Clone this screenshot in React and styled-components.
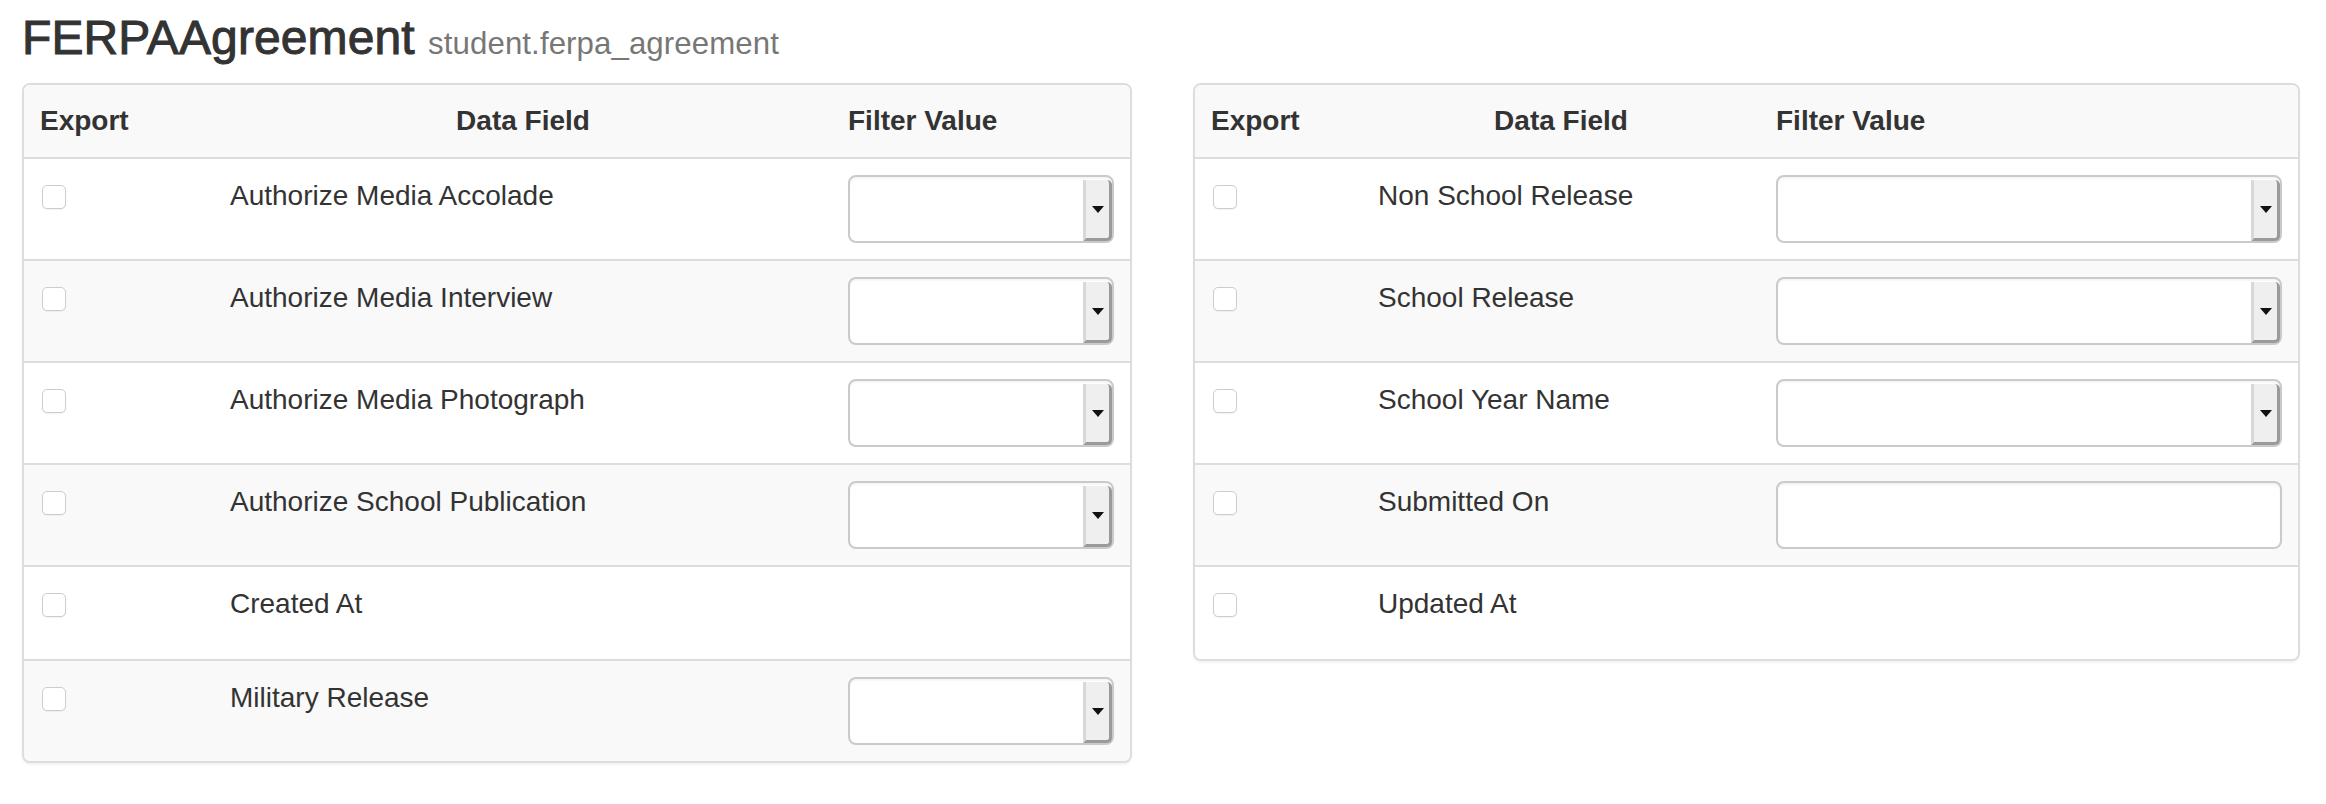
import React from "react";
import styled, { createGlobalStyle } from "styled-components";

const GlobalStyle = createGlobalStyle`
  html, body { margin: 0; padding: 0; background: #fff; }
  body {
    font-family: "Liberation Sans", Arial, Helvetica, sans-serif;
    color: #333;
    font-size: 28px;
    line-height: 40px;
  }
  * { box-sizing: border-box; }
`;

const Page = styled.div`
  width: 2326px;
  padding: 12px 0 40px 22px;
`;

const Title = styled.h3`
  margin: 0 0 18px;
  font-size: 48px;
  line-height: 52.8px;
  font-weight: 400;
  color: #333;
  letter-spacing: 0.1px;
  -webkit-text-stroke: 1px #333;
`;

const SubTitle = styled.small`
  font-size: 31.2px;
  line-height: 1;
  font-weight: 400;
  color: #777;
  letter-spacing: 0.1px;
  -webkit-text-stroke: 0;
`;

const Panels = styled.div`
  display: flex;
  align-items: flex-start;
  gap: 61px;
`;

const Panel = styled.div`
  width: ${(p) => p.$w}px;
  border: 2px solid #ddd;
  border-radius: 8px;
  overflow: hidden;
  background: #fff;
  box-shadow: 0 2px 2px rgba(0, 0, 0, 0.05);
`;

const Table = styled.table`
  width: 100%;
  border-collapse: separate;
  border-spacing: 0;
  table-layout: fixed;
`;

const Col = styled.col`
  width: ${(p) => (p.$w ? `${p.$w}px` : "auto")};
`;

const HeadCell = styled.th`
  padding: 16px;
  text-align: ${(p) => p.$align || "left"};
  font-weight: 700;
  background: #f9f9f9;
  vertical-align: bottom;
  line-height: 40px;
`;

const Row = styled.tr`
  background: ${(p) => (p.$striped ? "#f9f9f9" : "#fff")};
`;

const Cell = styled.td`
  padding: 16px;
  border-top: 2px solid #ddd;
  vertical-align: top;
  line-height: 40px;
`;

const CheckWrap = styled.div`
  height: 60px;
  padding: 10px 0 0 2px;
`;

const Checkbox = styled.input.attrs({ type: "checkbox" })`
  appearance: none;
  -webkit-appearance: none;
  display: block;
  width: 24px;
  height: 24px;
  margin: 0;
  border: 1.5px solid #cdcdcd;
  border-radius: 5px;
  background: #fff;
  box-shadow: 0 1px 1px rgba(0, 0, 0, 0.05);
`;

const FieldName = styled.span`
  display: block;
  padding-top: 1px;
`;

const SelectBox = styled.div`
  display: flex;
  justify-content: flex-end;
  height: 68px;
  width: 100%;
  padding: 3px 0 0 0;
  border: 2px solid #cacaca;
  border-radius: 8px;
  background: #fff;
  box-shadow: inset 0 2px 2px rgba(0, 0, 0, 0.04);
`;

const ArrowButton = styled.div`
  width: 29px;
  display: flex;
  align-items: center;
  justify-content: center;
  background: #efefef;
  border-left: 3px solid #d8d8d8;
  border-right: 3px solid #9a9a9a;
  border-bottom: 3px solid #9a9a9a;
  border-top-right-radius: 5px;
  border-bottom-right-radius: 5px;
`;

const Caret = styled.span`
  width: 0;
  height: 0;
  margin-top: 2px;
  border-left: 6px solid transparent;
  border-right: 6px solid transparent;
  border-top: 7px solid #111;
`;

const TextInput = styled.input.attrs({ type: "text" })`
  display: block;
  width: 100%;
  height: 68px;
  border: 2px solid #cacaca;
  border-radius: 8px;
  background: #fff;
  box-shadow: inset 0 2px 2px rgba(0, 0, 0, 0.05);
  font: inherit;
  padding: 0 16px;
  outline: none;
`;

function Filter({ kind }) {
  if (kind === "select") {
    return (
      <SelectBox>
        <ArrowButton>
          <Caret />
        </ArrowButton>
      </SelectBox>
    );
  }
  if (kind === "input") return <TextInput />;
  return null;
}

function FieldTable({ width, cols, rows }) {
  return (
    <Panel $w={width}>
      <Table>
        <colgroup>
          <Col $w={cols[0]} />
          <Col $w={cols[1]} />
          <Col />
        </colgroup>
        <thead>
          <tr>
            <HeadCell>Export</HeadCell>
            <HeadCell $align="center">Data Field</HeadCell>
            <HeadCell>Filter Value</HeadCell>
          </tr>
        </thead>
        <tbody>
          {rows.map((r, i) => (
            <Row key={r.label} $striped={i % 2 === 1}>
              <Cell>
                <CheckWrap>
                  <Checkbox />
                </CheckWrap>
              </Cell>
              <Cell>
                <FieldName>{r.label}</FieldName>
              </Cell>
              <Cell>
                <Filter kind={r.filter} />
              </Cell>
            </Row>
          ))}
        </tbody>
      </Table>
    </Panel>
  );
}

const leftRows = [
  { label: "Authorize Media Accolade", filter: "select" },
  { label: "Authorize Media Interview", filter: "select" },
  { label: "Authorize Media Photograph", filter: "select" },
  { label: "Authorize School Publication", filter: "select" },
  { label: "Created At", filter: null },
  { label: "Military Release", filter: "select" },
];

const rightRows = [
  { label: "Non School Release", filter: "select" },
  { label: "School Release", filter: "select" },
  { label: "School Year Name", filter: "select" },
  { label: "Submitted On", filter: "input" },
  { label: "Updated At", filter: null },
];

export default function App() {
  return (
    <>
      <GlobalStyle />
      <Page>
        <Title>
          FERPAAgreement <SubTitle>student.ferpa_agreement</SubTitle>
        </Title>
        <Panels>
          <FieldTable width={1110} cols={[190, 618]} rows={leftRows} />
          <FieldTable width={1107} cols={[167, 398]} rows={rightRows} />
        </Panels>
      </Page>
    </>
  );
}
